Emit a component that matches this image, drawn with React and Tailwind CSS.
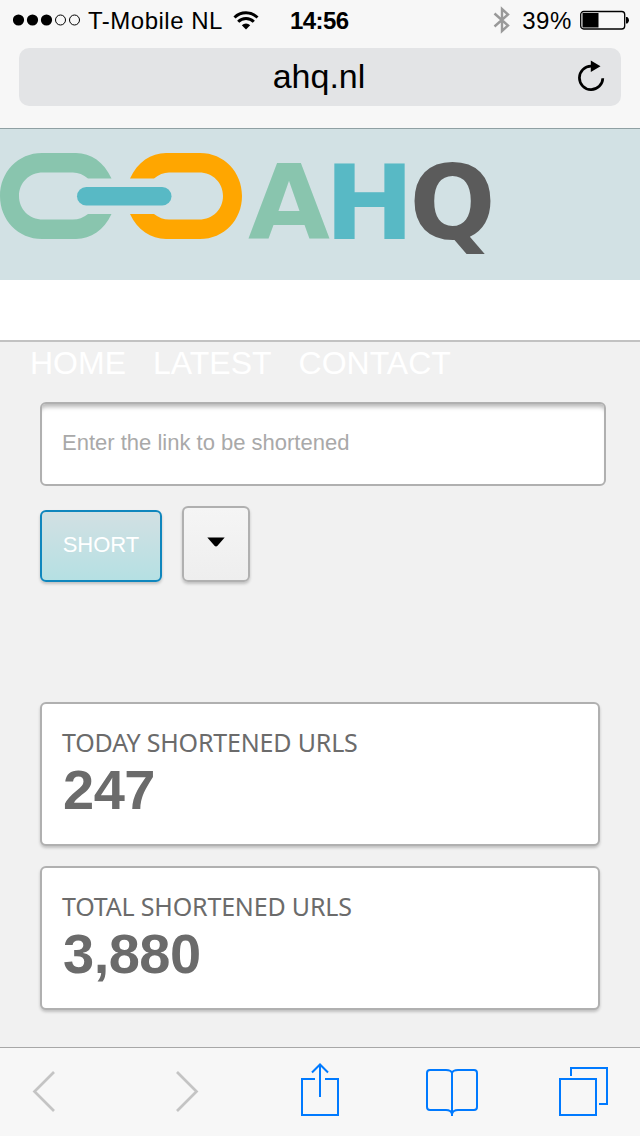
import React, { useState } from 'react';

const NAV_ITEMS = ['HOME', 'LATEST', 'CONTACT'];

const STATS = [
    { label: 'TODAY SHORTENED URLS', value: 247 },
    { label: 'TOTAL SHORTENED URLS', value: 3880 }
];

function StatusBar() {
    return (
        <div className="flex h-10 items-center pl-[13px] pr-[11px] text-2xl leading-10 text-black whitespace-nowrap">
            <div className="flex w-[277px] items-center">
                <svg width="68" height="12" viewBox="0 0 68 12" className="mr-[7px] shrink-0">
                    <circle cx="5.5" cy="6" r="5.6" />
                    <circle cx="19.5" cy="6" r="5.6" />
                    <circle cx="33.5" cy="6" r="5.6" />
                    <circle cx="47.5" cy="6" r="5" fill="none" stroke="black" />
                    <circle cx="61.5" cy="6" r="5" fill="none" stroke="black" />
                </svg>
                <span className="pt-0.5 tracking-[0.5px]">T-Mobile NL</span>
                <svg width="26" height="19" viewBox="0 0 26 19" className="ml-2.5 shrink-0">
                    <g fill="none" stroke="black" strokeWidth="3">
                        <path d="M1.500 6.500a16.500 16.500 0 0 1 23 0" />
                        <path d="M5.200 10.700a11 11 0 0 1 15.600 0" />
                    </g>
                    <path d="M8.800 14.200a6.300 6.300 0 0 1 8.400 0L13 18.500z" />
                </svg>
            </div>
            <span className="flex-1 pt-0.5 font-bold tracking-[-0.6px]">14:56</span>
            <svg width="17" height="28" viewBox="0 0 17 28" className="mr-3 shrink-0" fill="none" stroke="#999" strokeWidth="2.4">
                <path d="M1.500 7.500L15 19.500L9 25V3L15 8.500L1.500 20.500" />
            </svg>
            <span className="pt-0.5 tracking-[0.6px]">39%</span>
            <svg width="50" height="20" viewBox="0 0 50 20" className="ml-[7px] shrink-0">
                <rect x="1.700" y="1.500" width="44" height="17.500" rx="3" fill="none" stroke="black" strokeWidth="1.300" />
                <rect x="3.500" y="3" width="16" height="14.500" />
                <path d="M47 7h1.300q1.700 1.300 1.700 3.300t-1.700 3.300H47z" />
            </svg>
        </div>
    );
}

function AddressBar() {
    return (
        <div className="mx-[19px] mt-2 flex h-[58px] items-center rounded-[10px] bg-[#e3e4e6] pl-[43px] pr-[15px]">
            <span className="flex-1 pb-0.5 text-center text-[34px] leading-[56px] text-black">ahq.nl</span>
            <svg width="30" height="34" viewBox="0 0 30 34">
                <path d="M15 6.200a11.700 11.700 0 1 0 11.800 12" fill="none" stroke="black" strokeWidth="2.700" />
                <path d="M14.800 0.500L24.500 6.200L14.800 12z" />
            </svg>
        </div>
    );
}

function Logo() {
    return (
        <svg width="500" height="151" viewBox="0 129 500 151" fontFamily="DejaVu Sans" fontWeight="bold" fontSize="103">
            {/* left link */}
            <path
                fill="#89c5ae"
                d="M111.5 178.5C104 162 91 153 76 153H42C18 153 0 172 0 196s18 43 42 43h34c15 0 28-9 35.500-25H88q-7 5.500-15 5.500H43c-14 0-24-10.500-24-23.500s10-23.500 24-23.500h30q8 0 15 6z"
            />
            {/* right link */}
            <path
                fill="#ffa600"
                d="M130 178.500C137.500 162 151 153 166 153h34c24 0 42 19 42 43s-18 43-42 43h-34c-15 0-28.500-9-36-25h24q7 5.500 15 5.500h30c14 0 24-10.500 24-23.500s-10-23.500-24-23.500h-30q-8 0-15 6z"
            />
            <rect x="77" y="187" width="94.500" height="18.500" rx="9.250" fill="#58b9c5" />
            <text x="248" y="238.500" fill="#89c5ae" textLength="82" lengthAdjust="spacingAndGlyphs">A</text>
            <text x="324.500" y="238.500" fill="#58b9c5" textLength="90" lengthAdjust="spacingAndGlyphs">H</text>
            <text x="409.500" y="238.500" fill="#5b5b5b" textLength="86" lengthAdjust="spacingAndGlyphs">Q</text>
        </svg>
    );
}

function ShortenForm() {
    const [url, setUrl] = useState('');

    return (
        <form className="mt-[18px]" onSubmit={(e) => e.preventDefault()}>
            <input
                type="text"
                value={url}
                onChange={(e) => setUrl(e.target.value)}
                placeholder="Enter the link to be shortened"
                className="block h-[84px] w-[566px] rounded-md border-2 border-[#b0b0b0] bg-white px-5 pb-0.5 text-[22px] text-gray-700 placeholder-[#a9a9a9] outline-none shadow-[inset_0_6px_4px_-3px_rgba(0,0,0,0.28)]"
            />
            <div className="mt-5 flex items-end gap-5">
                <button
                    type="submit"
                    className="h-[72px] w-[122px] rounded-md border-2 border-[#0f86bd] bg-linear-to-b from-[#d2e0e3] to-[#b5e0e3] pb-1 text-[22px] text-white shadow-[0_2px_3px_rgba(0,0,0,0.2)]"
                >
                    SHORT
                </button>
                <button
                    type="button"
                    className="flex h-[76px] w-[68px] items-center justify-center rounded-md border-2 border-[#b0b0b0] bg-linear-to-b from-[#f5f5f5] to-[#eeeeee] shadow-[0_2px_3px_rgba(0,0,0,0.2)]"
                >
                    <svg width="18" height="10" viewBox="0 0 18 10" className="mb-1">
                        <path d="M0.300 0.500h17.400L10.500 8.800Q9 10.200 7.500 8.800z" />
                    </svg>
                </button>
            </div>
        </form>
    );
}

function StatCard({ label, value }) {
    return (
        <div className="h-36 w-[560px] rounded-md border-2 border-[#b0b0b0] bg-white px-5 pt-5 text-[#6b6b6b] shadow-[0_2px_3px_rgba(0,0,0,0.2)]">
            <div className="font-['Noto_Sans',sans-serif] text-[25px] leading-9 tracking-[-0.18px] whitespace-nowrap">{label}</div>
            <div className="pl-px text-[56px] font-bold leading-[60px] tracking-[-0.5px]">{value.toLocaleString('en-US')}</div>
        </div>
    );
}

function Toolbar() {
    return (
        <div className="flex h-[89px] shrink-0 items-start border-t border-[#a7a7a7] bg-[#f7f7f7] pl-8 pt-[14px] text-[#007aff]">
            <svg width="24" height="58" viewBox="0 0 24 58" fill="none" stroke="#c4c4c4" strokeWidth="2.700">
                <path d="M22 10L2.500 29.500L22 49" />
            </svg>
            <svg width="24" height="58" viewBox="0 0 24 58" fill="none" stroke="#c4c4c4" strokeWidth="2.700" className="ml-[119px]">
                <path d="M2 10L21.500 29.500L2 49" />
            </svg>
            <svg width="40" height="58" viewBox="0 0 40 58" fill="none" stroke="currentColor" strokeWidth="2" className="ml-[101px]">
                <path d="M15 17H2v36h36V17H25M20 35V3M12 10.500l8-8l8 8" />
            </svg>
            <svg width="54" height="58" viewBox="0 0 54 58" fill="none" stroke="currentColor" strokeWidth="2" className="ml-[85px]">
                <path d="M27 54V11Q26 8 21 8H5Q2 8 2 11V45Q2 48 5 48H21Q26 48 27 52Q28 48 33 48H49Q52 48 52 45V11Q52 8 49 8H33Q28 8 27 11" />
            </svg>
            <svg width="50" height="58" viewBox="0 0 50 58" fill="none" stroke="currentColor" strokeWidth="2" className="ml-20">
                <path d="M1 17h36v36H1zM12 14V6h36v36h-8" />
            </svg>
        </div>
    );
}

function App() {
    return (
        <div className="flex h-[1136px] w-[640px] flex-col overflow-hidden bg-[#f1f1f1] font-['Liberation_Sans',sans-serif]">
            <header className="h-[129px] shrink-0 border-b border-[#8fa0a3] bg-[#f7f7f7]">
                <StatusBar />
                <AddressBar />
            </header>

            <div className="h-[151px] shrink-0 bg-[#d2e1e4]">
                <Logo />
            </div>
            <div className="h-[62px] shrink-0 border-b-2 border-[#c2c2c2] bg-white" />

            <main className="flex-1 pl-10">
                <nav className="-ml-2.5 flex h-[42px] gap-[27px] text-[32px] leading-[42px] text-white">
                    {NAV_ITEMS.map((item) => (
                        <a key={item} href="#">{item}</a>
                    ))}
                </nav>
                <ShortenForm />

                {/* Counters */}
                <div className="mt-[120px] flex flex-col gap-5">
                    {STATS.map((stat) => (
                        <StatCard key={stat.label} {...stat} />
                    ))}
                </div>
            </main>

            <Toolbar />
        </div>
    );
}

export default App;
